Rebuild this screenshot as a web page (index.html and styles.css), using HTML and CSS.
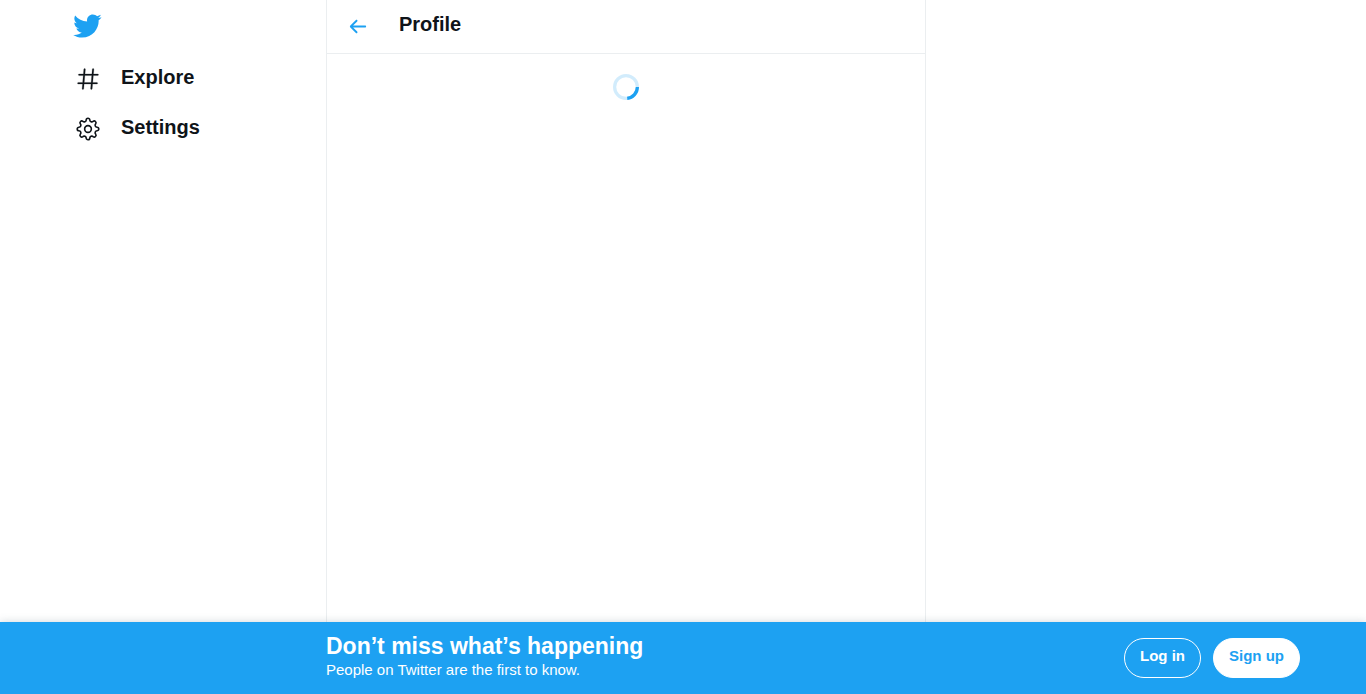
FILE: index.html
```html
<!DOCTYPE html>
<html lang="en">
<head>
<meta charset="utf-8">
<meta name="viewport" content="width=device-width, initial-scale=1">
<title>Profile / Twitter</title>
<link rel="stylesheet" href="styles.css">
</head>
<body>
<div class="layout">
  <header class="sidebar">
    <a class="logo" href="#" aria-label="Twitter">
      <svg class="logo-icon" viewBox="0 0 24 24" aria-hidden="true"><path d="M23.643 4.937c-.835.37-1.732.62-2.675.733.962-.576 1.7-1.49 2.048-2.578-.9.534-1.897.922-2.958 1.13-.85-.904-2.06-1.47-3.4-1.47-2.572 0-4.658 2.086-4.658 4.66 0 .364.042.718.12 1.06-3.873-.195-7.304-2.05-9.602-4.868-.4.69-.63 1.49-.63 2.342 0 1.616.823 3.043 2.072 3.878-.764-.025-1.482-.234-2.11-.583v.06c0 2.257 1.605 4.14 3.737 4.568-.392.106-.803.162-1.227.162-.3 0-.593-.028-.877-.082.593 1.85 2.313 3.198 4.352 3.234-1.595 1.25-3.604 1.995-5.786 1.995-.376 0-.747-.022-1.112-.065 2.062 1.323 4.51 2.093 7.14 2.093 8.57 0 13.255-7.098 13.255-13.254 0-.2-.005-.402-.014-.602.91-.658 1.7-1.477 2.323-2.41z"/></svg>
    </a>
    <nav class="nav">
      <a class="nav-link" href="#">
        <svg class="nav-icon" viewBox="0 0 24 24" aria-hidden="true"><path d="M21 7.337h-3.93l.372-4.272c.036-.412-.27-.775-.682-.812-.417-.03-.776.27-.812.683l-.383 4.4h-6.32l.37-4.27c.037-.413-.27-.776-.68-.813-.42-.03-.777.27-.813.683l-.382 4.4H3.782c-.414 0-.75.337-.75.75s.336.75.75.75H7.61l-.55 6.327H3c-.414 0-.75.336-.75.75s.336.75.75.75h3.93l-.372 4.272c-.036.412.27.775.682.812l.066.003c.385 0 .712-.295.746-.686l.383-4.4h6.32l-.37 4.27c-.036.413.27.776.682.813l.066.003c.385 0 .712-.295.746-.686l.382-4.4h3.957c.413 0 .75-.337.75-.75s-.337-.75-.75-.75H16.39l.55-6.327H21c.414 0 .75-.336.75-.75s-.336-.75-.75-.75zm-6.115 7.826h-6.32l.55-6.326h6.32l-.55 6.326z"/></svg>
        <span>Explore</span>
      </a>
      <a class="nav-link" href="#">
        <svg class="nav-icon nav-icon-outline" viewBox="-12 -12 24 24" aria-hidden="true"><path d="M-1.66-8.34A1.66 1.6 0 0 1 1.66-8.34A1.8 1.8 0 0 0 4.72-7.07A1.68 1.68 0 0 1 7.07-4.72A1.8 1.8 0 0 0 8.34-1.66A1.6 1.66 0 0 1 8.34 1.66A1.8 1.8 0 0 0 7.07 4.72A1.68 1.68 0 0 1 4.72 7.07A1.8 1.8 0 0 0 1.66 8.34A1.66 1.6 0 0 1-1.66 8.34A1.8 1.8 0 0 0-4.72 7.07A1.68 1.68 0 0 1-7.07 4.72A1.8 1.8 0 0 0-8.34 1.66A1.6 1.66 0 0 1-8.34-1.66A1.8 1.8 0 0 0-7.07-4.72A1.68 1.68 0 0 1-4.72-7.07A1.8 1.8 0 0 0-1.66-8.34Z"/><circle r="3.1"/></svg>
        <span>Settings</span>
      </a>
    </nav>
  </header>
  <main class="column">
    <div class="column-header">
      <button class="back" type="button" aria-label="Back">
        <svg class="back-icon" viewBox="0 0 24 24" aria-hidden="true"><path d="M20 11H7.414l4.293-4.293c.39-.39.39-1.023 0-1.414s-1.023-.39-1.414 0l-6 6c-.39.39-.39 1.023 0 1.414l6 6c.195.195.45.293.707.293s.512-.098.707-.293c.39-.39.39-1.023 0-1.414L7.414 13H20c.553 0 1-.447 1-1s-.447-1-1-1z"/></svg>
      </button>
      <h1 class="title">Profile</h1>
    </div>
    <div class="loading" role="progressbar" aria-label="Loading">
      <svg class="spinner" viewBox="0 0 32 32" aria-hidden="true"><circle class="spinner-track" cx="16" cy="16" r="14"/><path class="spinner-arc" d="M30 16A14 14 0 0 1 17.5 29.9"/></svg>
    </div>
  </main>
</div>
<footer class="banner">
  <div class="banner-text">
    <h2 class="banner-title">Don’t miss what’s happening</h2>
    <p class="banner-subtitle">People on Twitter are the first to know.</p>
  </div>
  <div class="banner-actions">
    <a class="button" href="#">Log in</a>
    <a class="button button-filled" href="#">Sign up</a>
  </div>
</footer>
</body>
</html>
```

FILE: styles.css
```css
* {
  box-sizing: border-box;
}

body {
  margin: 0;
  min-height: 100vh;
  display: flex;
  flex-direction: column;
  background: #fff;
  color: #0f1419;
  font: 15px/20px "Liberation Sans", Arial, sans-serif;
}

h1, h2, p {
  margin: 0;
}

a {
  color: inherit;
  text-decoration: none;
}

svg {
  display: block;
  fill: currentColor;
}

.layout,
.banner {
  display: grid;
  grid-template-columns: 326fr minmax(auto, 600px) 440fr;
}

.layout {
  flex: 1;
}

.sidebar {
  padding-left: 72px;
}

.logo {
  display: flex;
  align-items: center;
  height: 52px;
  color: #1da1f2;
}

.logo-icon {
  width: 30px;
  height: 30px;
}

.nav {
  display: flex;
  flex-direction: column;
  padding: 2px 0 0 3px;
}

.nav-link {
  display: flex;
  align-items: center;
  gap: 20px;
  height: 50px;
  font-size: 20px;
  font-weight: 700;
  line-height: 24px;
}

.nav-icon {
  width: 26px;
  height: 26px;
  overflow: visible;
  stroke: currentColor;
  stroke-width: 0.2;
}

.nav-link span {
  padding-bottom: 4px;
}

.nav-icon-outline {
  fill: none;
  stroke-width: 1.5;
}

.column {
  border: solid #ebeef0;
  border-width: 0 1px;
}

.column-header {
  display: flex;
  align-items: center;
  gap: 30px;
  height: 54px;
  padding-left: 19px;
  border-bottom: 1px solid #ebeef0;
}

.back {
  padding: 0;
  border: 0;
  background: none;
  color: #1da1f2;
}

.back-icon {
  width: 23px;
  height: 23px;
}

.title {
  padding-bottom: 6px;
  font-size: 20px;
  line-height: 24px;
}

.loading {
  display: flex;
  justify-content: center;
  padding: 20px;
}

.spinner {
  width: 26px;
  height: 26px;
  fill: none;
  stroke: #1da1f2;
  stroke-width: 4;
}

.spinner-track {
  opacity: 0.2;
}

.banner {
  position: relative;
  align-items: center;
  min-height: 72px;
  background: #1da1f2;
  color: #fff;
  box-shadow: 0 0 8px rgba(101, 119, 134, 0.3);
}

.banner-text {
  grid-column: 2;
  padding-bottom: 4px;
}

.banner-title {
  font-size: 23px;
  line-height: 28px;
}

.banner-actions {
  display: flex;
  justify-content: flex-end;
  gap: 12px;
  padding-right: 66px;
}

.button {
  height: 40px;
  padding: 7px 15px;
  border: 1px solid #fff;
  border-radius: 20px;
  font-weight: 700;
}

.button-filled {
  background: #fff;
  color: #1da1f2;
}
```
